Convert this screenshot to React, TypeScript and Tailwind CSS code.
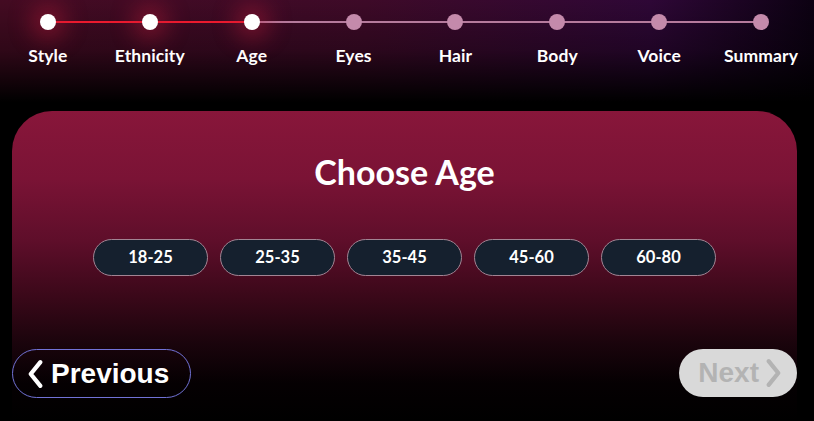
import React from "react";

const steps = ["Style", "Ethnicity", "Age", "Eyes", "Hair", "Body", "Voice", "Summary"];
const current = 2;
const ages = ["18-25", "25-35", "35-45", "45-60", "60-80"];

function Chevron({ dir, className }: { dir: "left" | "right"; className?: string }) {
  return (
    <svg viewBox="0 0 16 28" className={className} fill="none" stroke="currentColor" strokeWidth="4" strokeLinecap="round" strokeLinejoin="round">
      {dir === "left" ? <path d="M13 3 L4 14 L13 25" /> : <path d="M3 3 L12 14 L3 25" />}
    </svg>
  );
}

export default function App() {
  return (
    <div className="relative w-[814px] h-[421px] overflow-hidden bg-black font-['Lato','Noto_Sans',sans-serif] text-white">
      {/* header */}
      <div className="h-[111px] bg-[linear-gradient(to_bottom,rgba(0,0,0,0)_0%,rgba(0,0,0,0.3)_45%,#000_92%),linear-gradient(to_right,#440b22_0%,#3e0a28_45%,#2e0736_80%,#0c0112_100%)]">
        <div className="ml-[-3px] w-[815px] grid grid-cols-8 pt-[14px]">
          {steps.map((s, i) => {
            const done = i <= current;
            const leftRed = i > 0 && i <= current;
            const rightRed = i < current;
            return (
              <div key={s} className="relative flex flex-col items-center">
                {i > 0 && (
                  <div className={`absolute left-0 right-1/2 top-[7px] h-[2px] ${leftRed ? "bg-[#ec1a2e]" : "bg-[#b57a9c]"}`} />
                )}
                {i < steps.length - 1 && (
                  <div className={`absolute left-1/2 right-0 top-[7px] h-[2px] ${rightRed ? "bg-[#ec1a2e]" : "bg-[#b57a9c]"}`} />
                )}
                <div
                  className={`relative z-10 w-[16px] h-[16px] rounded-full ${
                    done ? "bg-white shadow-[0_0_22px_10px_rgba(200,30,60,0.4)]" : "bg-[#c48aab]"
                  }`}
                />
                <div className="mt-[15px] text-[17.5px] font-bold leading-[22px] tracking-[0.1px]">{s}</div>
              </div>
            );
          })}
        </div>
      </div>

      {/* card */}
      <div className="ml-[12px] mr-[17px] h-[310px] rounded-t-[40px] bg-[linear-gradient(to_bottom,#88163a_0%,#7a1335_22%,#5e0e2a_42%,#3a0819_60%,#1a040c_75%,#050002_88%,#000_100%)] flex flex-col">
        <h1 className="mt-[40px] text-center text-[34px] font-bold leading-[42px]">Choose Age</h1>
        <div className="mt-[46px] flex justify-center gap-[12px]">
          {ages.map((a) => (
            <button
              key={a}
              className="w-[115px] h-[37px] rounded-full bg-[#15202e] border border-[#a28493] text-[16.5px] font-bold text-white"
            >
              {a}
            </button>
          ))}
        </div>
        <div className="mt-[73px] flex justify-between items-start font-['Liberation_Sans',Arial,sans-serif]">
          <button className="h-[49px] pl-[13px] pr-[21px] rounded-full border border-[#7172d6] bg-transparent flex items-center gap-[7px] text-[28px] font-bold text-white">
            <Chevron dir="left" className="w-[18px] h-[30px]" />
            <span>Previous</span>
          </button>
          <button className="h-[48px] pl-[19px] pr-[14px] rounded-full bg-[#d9d9d9] flex items-center gap-[6px] text-[28px] font-bold text-[#b3b3b3]">
            <span>Next</span>
            <Chevron dir="right" className="w-[18px] h-[30px]" />
          </button>
        </div>
      </div>
    </div>
  );
}
